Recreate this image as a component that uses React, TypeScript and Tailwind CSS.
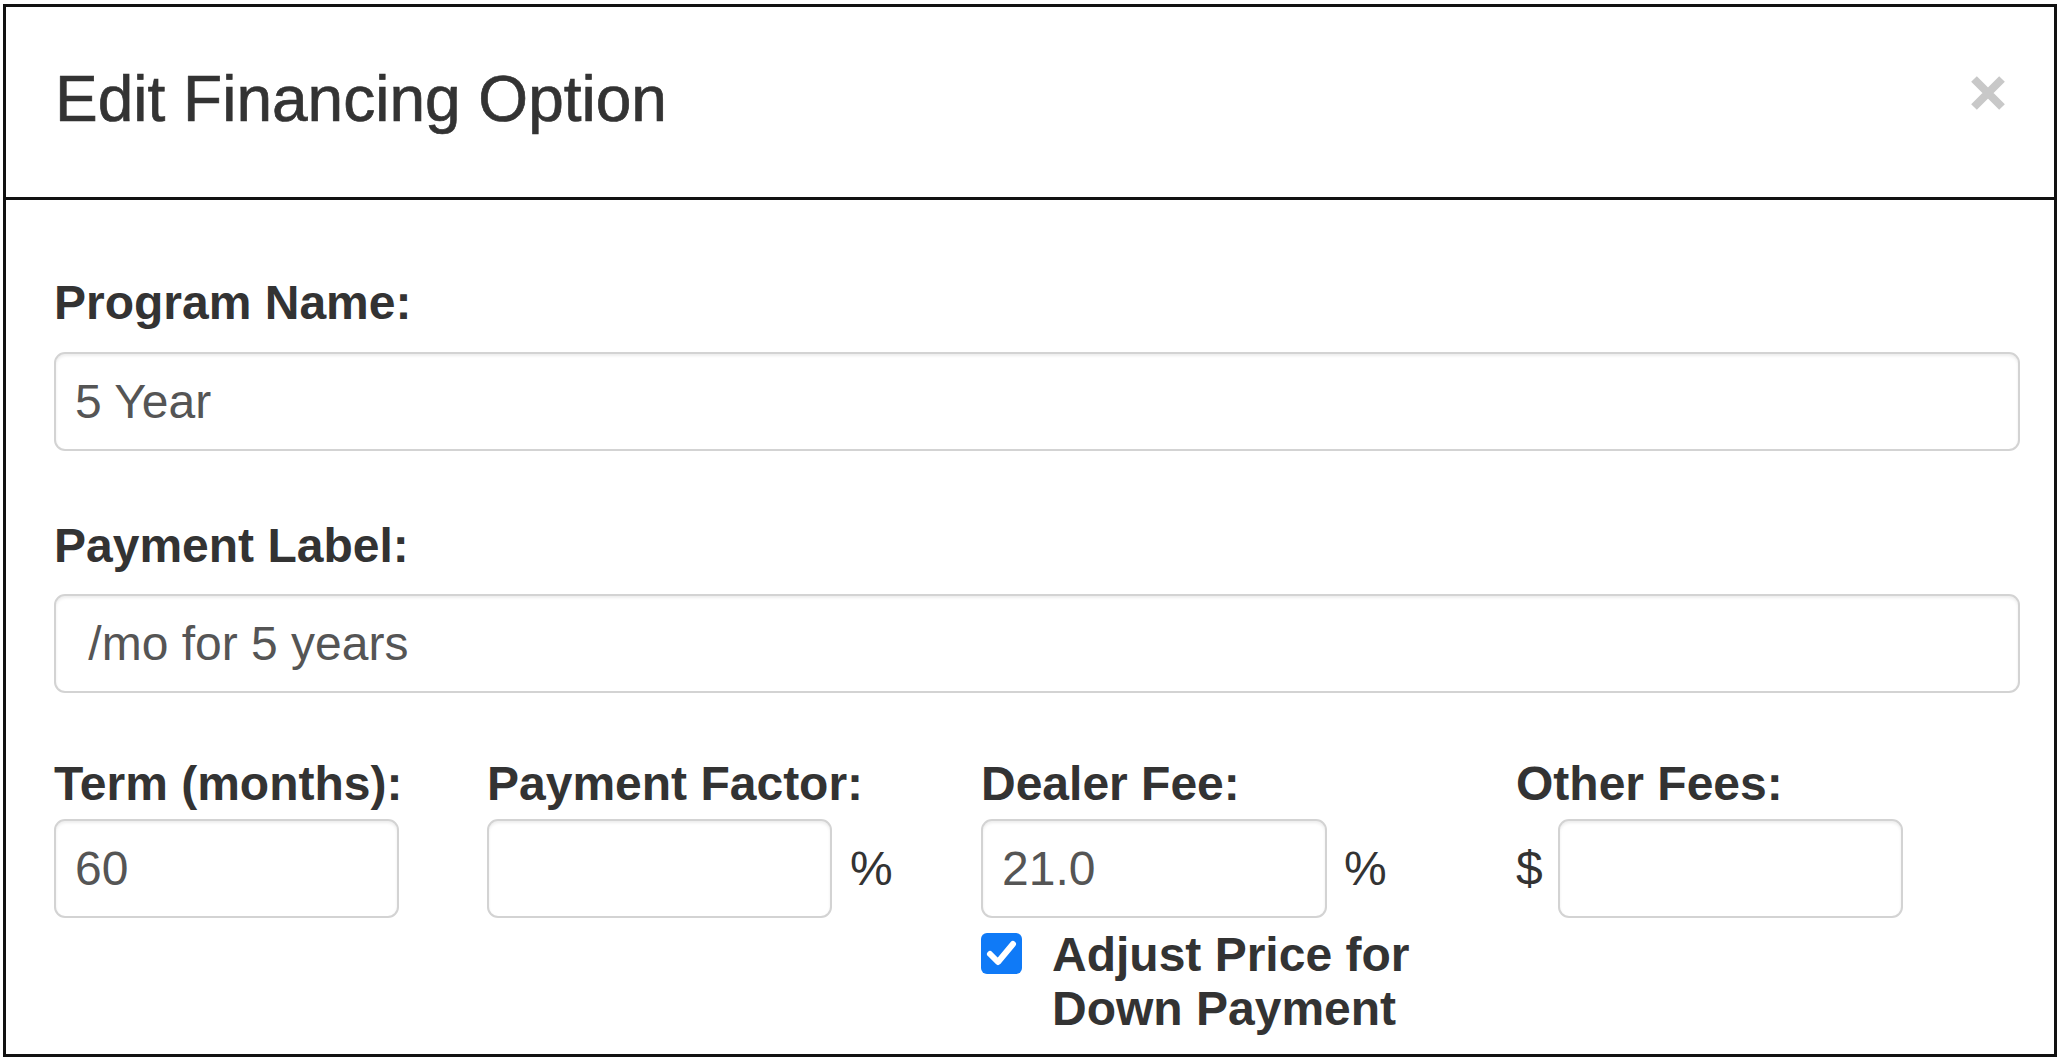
import React from "react";

const inputCls =
  "h-[99px] rounded-[11px] border-2 border-[#d3d3d3] bg-white px-[19px] text-[48px] text-[#555] shadow-[inset_0_2px_3px_rgba(0,0,0,0.075)] outline-none";

function TextField({ value = "", className = "" }: { value?: string; className?: string }) {
  return <input type="text" defaultValue={value} className={`${inputCls} ${className}`} />;
}

function FieldLabel({ children }: { children: React.ReactNode }) {
  return (
    <label className="block text-[48px] font-bold leading-[56px] text-[#333]">{children}</label>
  );
}

function CloseIcon() {
  return (
    <svg width="36" height="36" viewBox="0 0 36 36" fill="none">
      <path d="M4 4 L32 32 M32 4 L4 32" stroke="#c8c8c8" strokeWidth="8" />
    </svg>
  );
}

function CheckedBox() {
  return (
    <span className="mt-[5px] flex h-[41px] w-[41px] shrink-0 items-center justify-center rounded-[6px] bg-[#0f7af7]">
      <svg width="41" height="41" viewBox="0 0 41 41" fill="none">
        <path
          d="M9 21 L17 29 L32 11"
          stroke="#fff"
          strokeWidth="6"
          strokeLinecap="round"
          strokeLinejoin="round"
        />
      </svg>
    </span>
  );
}

export default function App() {
  return (
    <div className="min-h-screen bg-white pl-[3px] pt-[4px] font-['Liberation_Sans',Arial,Helvetica,sans-serif]">
      <div className="flex h-[1053px] w-[2054px] flex-col overflow-hidden border-[3px] border-[#111]">
        <header className="flex h-[193px] shrink-0 items-start justify-between border-b-[3px] border-[#111] pl-[49px] pr-[48px] pt-[60px]">
          <h4 className="text-[64px] font-normal leading-none text-[#333] [-webkit-text-stroke:0.7px_#333]">
            Edit Financing Option
          </h4>
          <button type="button" className="mt-[8px]" aria-label="Close">
            <CloseIcon />
          </button>
        </header>

        <div className="pl-[48px] pr-[34px] pt-[75px]">
          <FieldLabel>Program Name:</FieldLabel>
          <TextField value="5 Year" className="mt-[21px] w-full" />

          <div className="mt-[67px]">
            <FieldLabel>Payment Label:</FieldLabel>
          </div>
          <TextField value=" /mo for 5 years" className="mt-[20px] w-full" />

          <div className="mt-[63px] flex">
            <div className="w-[433px]">
              <FieldLabel>Term (months):</FieldLabel>
              <TextField value="60" className="mt-[7px] w-[345px]" />
            </div>

            <div className="w-[494px]">
              <FieldLabel>Payment Factor:</FieldLabel>
              <div className="mt-[7px] flex items-baseline gap-[18px]">
                <TextField className="w-[345px]" />
                <span className="text-[48px] text-[#333]">%</span>
              </div>
            </div>

            <div className="w-[535px]">
              <FieldLabel>Dealer Fee:</FieldLabel>
              <div className="mt-[7px] flex items-baseline gap-[17px]">
                <TextField value="21.0" className="w-[346px]" />
                <span className="text-[48px] text-[#333]">%</span>
              </div>
              <label className="mt-[10px] flex items-start gap-[30px]">
                <CheckedBox />
                <span className="w-[380px] text-[48px] font-bold leading-[54px] text-[#333]">
                  Adjust Price for Down Payment
                </span>
              </label>
            </div>

            <div>
              <FieldLabel>Other Fees:</FieldLabel>
              <div className="mt-[7px] flex items-baseline gap-[15px]">
                <span className="text-[48px] text-[#333]">$</span>
                <TextField className="w-[345px]" />
              </div>
            </div>
          </div>
        </div>
      </div>
    </div>
  );
}
